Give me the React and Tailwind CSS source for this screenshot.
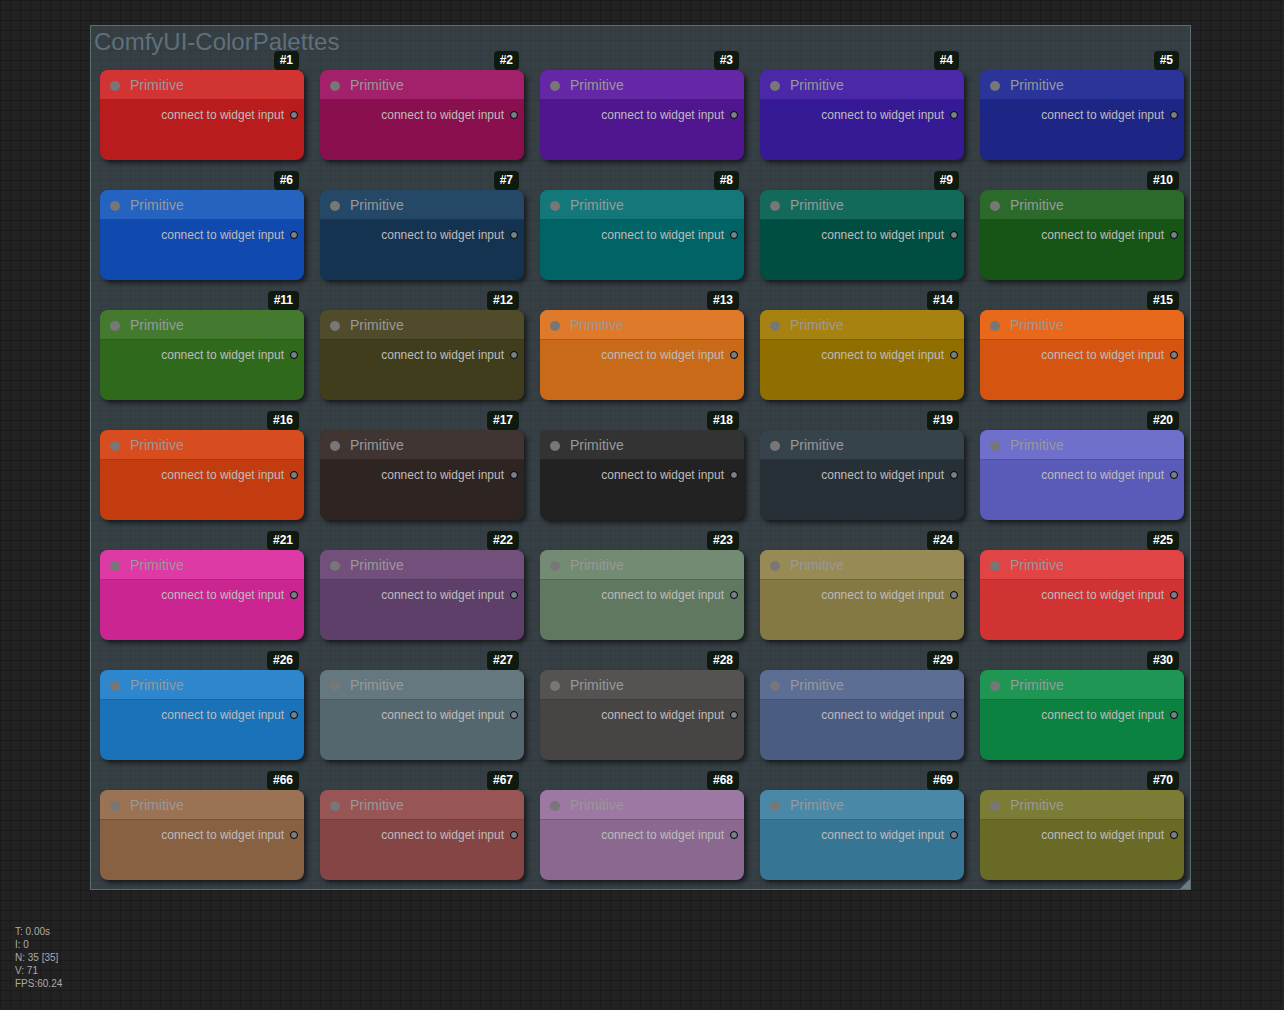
import React from 'react';

const nodes = [
    { id: 1, title: '#d23434', body: '#b91c1c' },
    { id: 2, title: '#a2216a', body: '#8a0f4e' },
    { id: 3, title: '#6527a5', body: '#4f1690' },
    { id: 4, title: '#4a28a8', body: '#361a95' },
    { id: 5, title: '#2a3499', body: '#1d2585' },
    { id: 6, title: '#2463bf', body: '#114aae' },
    { id: 7, title: '#244866', body: '#143350' },
    { id: 8, title: '#14787a', body: '#006466' },
    { id: 9, title: '#146a5a', body: '#004e42' },
    { id: 10, title: '#2b6a2b', body: '#165516' },
    { id: 11, title: '#437a30', body: '#2f6a1c' },
    { id: 12, title: '#4f4b2b', body: '#3f3d1c' },
    { id: 13, title: '#df7a2a', body: '#c86a18' },
    { id: 14, title: '#a88210', body: '#916e00' },
    { id: 15, title: '#e8681c', body: '#d55510' },
    { id: 16, title: '#d84d20', body: '#c23c10' },
    { id: 17, title: '#403532', body: '#2e2422' },
    { id: 18, title: '#333333', body: '#222222' },
    { id: 19, title: '#37434a', body: '#263036' },
    { id: 20, title: '#6f6fcc', body: '#5a5ab8' },
    { id: 21, title: '#de3aa6', body: '#cb2592' },
    { id: 22, title: '#734f7c', body: '#5d3f69' },
    { id: 23, title: '#728b72', body: '#5f785f' },
    { id: 24, title: '#978a55', body: '#847843' },
    { id: 25, title: '#e04444', body: '#d13232' },
    { id: 26, title: '#2e86cc', body: '#1a72b8' },
    { id: 27, title: '#657880', body: '#54666e' },
    { id: 28, title: '#555352', body: '#474544' },
    { id: 29, title: '#5d6e94', body: '#4a5c82' },
    { id: 30, title: '#1f9654', body: '#0b8240' },
    { id: 66, title: '#9a7254', body: '#876142' },
    { id: 67, title: '#985555', body: '#854545' },
    { id: 68, title: '#9c78a2', body: '#8a6890' },
    { id: 69, title: '#4a88a8', body: '#377594' },
    { id: 70, title: '#7b7c36', body: '#686a26' },
];

const Node = ({ id, title, body }) => (
    <div className="flex flex-col">
        <div className="flex justify-end pr-[5px] h-[18px]">
            <div className="h-[19px] -mt-[1px] px-[6px] rounded-[4px] bg-[#0e1a10] text-white text-[12px] font-bold leading-[19px]">
                #{id}
            </div>
        </div>
        <div
            className="relative w-[204px] h-[90px] rounded-[8px] overflow-hidden shadow-[3px_3px_4px_rgba(0,0,0,0.55)]"
            style={{ backgroundColor: body }}
        >
            <div
                className="h-[30px] pt-[2px] flex items-center border-b border-black/25"
                style={{ backgroundColor: title }}
            >
                <div className="w-[10px] h-[10px] rounded-full bg-[#777] ml-[10px]" />
                <span className="ml-[10px] text-[14px] text-[#999]">Primitive</span>
            </div>
            <div className="flex items-center justify-end h-[28px] pt-[2px] pr-[6px]">
                <span className="text-[12px] text-[#bdbdbd]">connect to widget input</span>
                <div className="w-[8px] h-[8px] rounded-full bg-[#778088] border border-black ml-[6px]" />
            </div>
        </div>
    </div>
);

export default function App() {
    return (
        <div className="w-[1284px] h-[1010px] overflow-hidden bg-[#222] bg-[linear-gradient(rgba(0,0,0,0.22)_1px,transparent_1px),linear-gradient(90deg,rgba(0,0,0,0.22)_1px,transparent_1px)] bg-[size:10px_10px] font-['Liberation_Sans',Arial,sans-serif]">
            <div className="pt-[25px] pl-[90px]">
                <div className="relative w-[1101px] h-[865px] border border-[#5d6b73] bg-[rgba(80,100,110,0.45)]">
                    <div className="h-[26px] pt-[3px] pl-[3px] text-[24px] leading-[26px] text-[#5e707a] whitespace-nowrap">
                        ComfyUI-ColorPalettes
                    </div>
                    <div className="grid grid-cols-[repeat(5,204px)] gap-x-[16px] gap-y-[12px] pl-[9px]">
                        {nodes.map(n => (
                            <Node key={n.id} {...n} />
                        ))}
                    </div>
                    <div className="absolute right-0 bottom-0 w-0 h-0 border-l-[10px] border-l-transparent border-b-[10px] border-b-[#6c7c86]" />
                </div>
            </div>
            <div className="mt-[35px] pl-[15px] text-[10px] leading-[13px] text-[#aaa]">
                <div>T: 0.00s</div>
                <div>I: 0</div>
                <div>N: 35 [35]</div>
                <div>V: 71</div>
                <div>FPS:60.24</div>
            </div>
        </div>
    );
}
